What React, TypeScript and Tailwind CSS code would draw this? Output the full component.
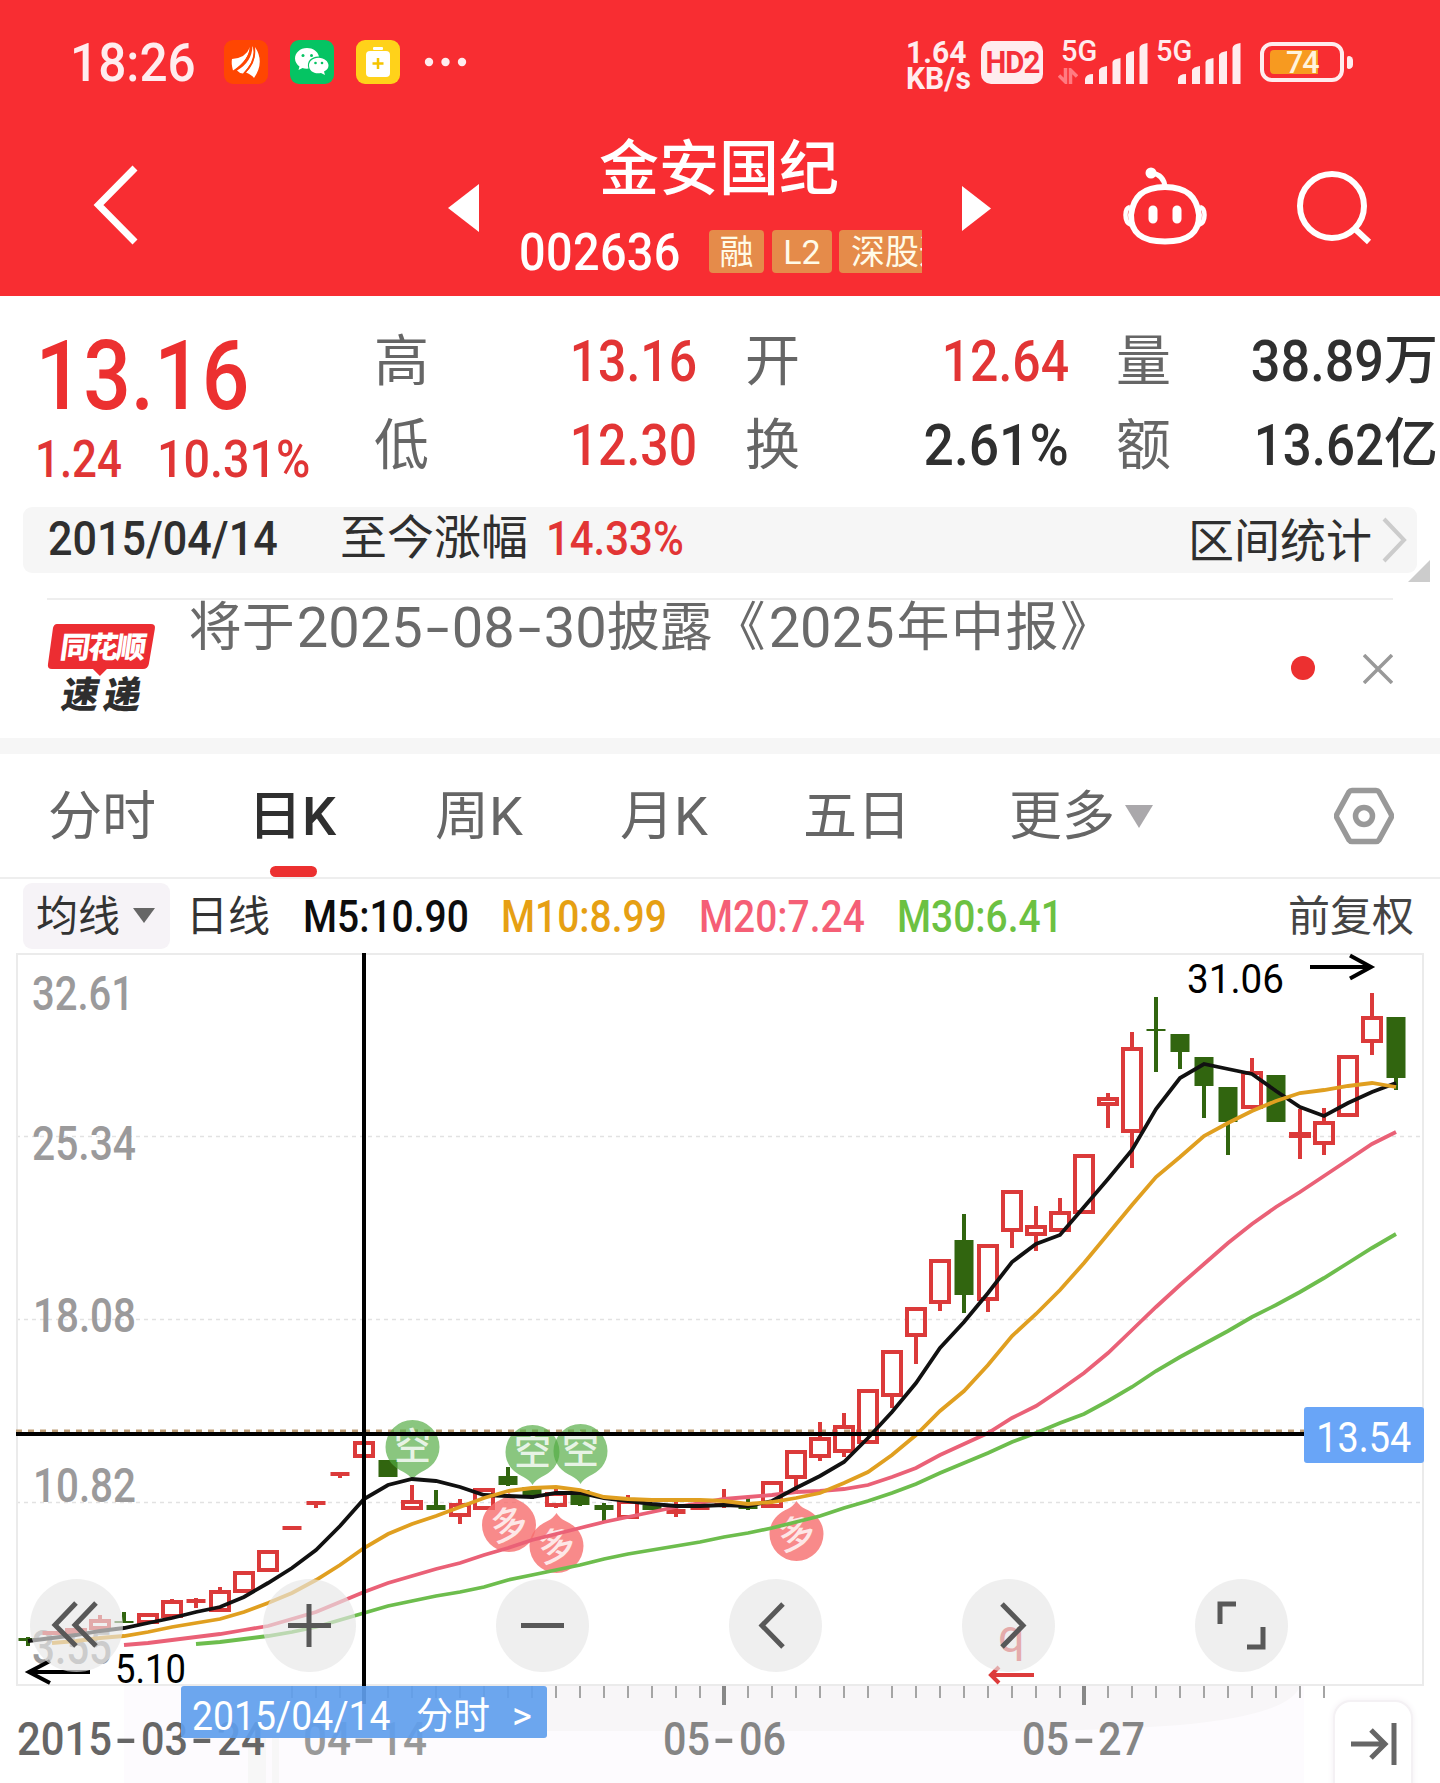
import { Fragment } from 'react';
import type { ReactNode } from 'react';
import { clsx } from 'clsx';

type Candle = {
  up: boolean;
  high: number;
  top: number;
  bottom: number;
  low: number;
};

const STEP = 24;
const FIRST_X = 28;
const xAt = (i: number) => FIRST_X + i * STEP;

// [direction, high, body top, body bottom, low]
const rawCandles: [number, number, number, number, number][] = [
  [0, 1637, 1638, 1641, 1646],
  [1, 1631, 1631, 1635, 1635],
  [1, 1628, 1628, 1634, 1634],
  [1, 1615, 1619, 1630, 1630],
  [0, 1612, 1621, 1623, 1623],
  [1, 1613, 1613, 1624, 1624],
  [1, 1599, 1600, 1618, 1618],
  [1, 1598, 1599, 1603, 1608],
  [1, 1587, 1590, 1612, 1612],
  [1, 1571, 1571, 1593, 1593],
  [1, 1550, 1550, 1572, 1572],
  [1, 1526, 1526, 1530, 1530],
  [1, 1501, 1501, 1505, 1508],
  [1, 1472, 1472, 1476, 1478],
  [1, 1441, 1441, 1458, 1458],
  [0, 1460, 1460, 1477, 1477],
  [1, 1485, 1500, 1510, 1510],
  [0, 1490, 1505, 1510, 1510],
  [1, 1499, 1503, 1517, 1524],
  [1, 1488, 1488, 1510, 1510],
  [0, 1467, 1476, 1485, 1486],
  [0, 1487, 1487, 1497, 1499],
  [1, 1488, 1492, 1507, 1508],
  [0, 1490, 1490, 1505, 1506],
  [0, 1503, 1505, 1510, 1521],
  [1, 1495, 1500, 1519, 1519],
  [0, 1505, 1505, 1510, 1510],
  [1, 1502, 1509, 1514, 1517],
  [1, 1506, 1506, 1510, 1510],
  [1, 1489, 1503, 1507, 1508],
  [0, 1498, 1505, 1509, 1510],
  [1, 1481, 1481, 1508, 1508],
  [1, 1450, 1450, 1479, 1494],
  [1, 1422, 1437, 1458, 1461],
  [1, 1413, 1425, 1453, 1457],
  [1, 1389, 1389, 1444, 1444],
  [1, 1350, 1350, 1397, 1408],
  [1, 1307, 1307, 1337, 1364],
  [1, 1259, 1259, 1304, 1311],
  [0, 1214, 1240, 1295, 1313],
  [1, 1244, 1244, 1301, 1312],
  [1, 1190, 1190, 1232, 1248],
  [1, 1206, 1225, 1236, 1251],
  [1, 1198, 1211, 1232, 1232],
  [1, 1154, 1154, 1214, 1214],
  [1, 1093, 1097, 1106, 1128],
  [1, 1032, 1047, 1133, 1168],
  [0, 997, 1029, 1031, 1072],
  [0, 1034, 1034, 1052, 1069],
  [0, 1057, 1057, 1086, 1118],
  [0, 1087, 1087, 1122, 1155],
  [1, 1058, 1071, 1109, 1109],
  [0, 1075, 1075, 1122, 1122],
  [1, 1109, 1132, 1138, 1159],
  [1, 1108, 1121, 1145, 1155],
  [1, 1055, 1055, 1117, 1117],
  [1, 993, 1016, 1043, 1055],
  [0, 1017, 1017, 1078, 1090],
];

const candles: Candle[] = rawCandles.map(([up, high, top, bottom, low]) => ({
  up: up === 1,
  high,
  top,
  bottom,
  low,
}));

const averages = [
  {
    name: 'M30',
    color: '#6dbd4d',
    start: 7,
    ys: [
      1644, 1642, 1639, 1636, 1632, 1627, 1620, 1613, 1606, 1601, 1596, 1592, 1587, 1580, 1575, 1570,
      1565, 1559, 1554, 1550, 1546, 1542, 1537, 1533, 1528, 1522, 1516, 1508, 1501, 1493, 1484, 1473,
      1463, 1453, 1442, 1433, 1423, 1414, 1401, 1387, 1371, 1357, 1344, 1331, 1317, 1305, 1292, 1278,
      1263, 1248, 1234,
    ],
  },
  {
    name: 'M20',
    color: '#ea6177',
    start: 4,
    ys: [
      1645, 1643, 1640, 1637, 1634, 1630, 1626, 1619, 1612, 1602, 1592, 1583, 1576, 1569, 1563, 1555,
      1548, 1540, 1534, 1528, 1522, 1517, 1512, 1507, 1503, 1499, 1497, 1495, 1492, 1491, 1489, 1485,
      1477, 1468, 1455, 1444, 1433, 1418, 1406, 1390, 1373, 1353, 1330, 1307, 1285, 1264, 1243, 1224,
      1207, 1192, 1176, 1160, 1144, 1132,
    ],
  },
  {
    name: 'M5',
    color: '#111111',
    start: 0,
    ys: [
      1641, 1638, 1635, 1631, 1628, 1623, 1618, 1612, 1607, 1597, 1583, 1568, 1550, 1526, 1499, 1485,
      1479, 1481, 1487, 1495, 1496, 1497, 1493, 1493, 1498, 1501, 1504, 1506, 1506, 1505, 1506, 1501,
      1488, 1476, 1462, 1438, 1412, 1383, 1348, 1322, 1293, 1262, 1244, 1235, 1207, 1179, 1150, 1109,
      1078, 1064, 1069, 1074, 1091, 1107, 1116, 1103, 1092, 1083,
    ],
  },
  {
    name: 'M10',
    color: '#e09f20',
    start: 1,
    ys: [
      1643, 1641, 1638, 1636, 1632, 1627, 1623, 1619, 1612, 1603, 1593, 1580, 1565, 1548, 1534, 1524,
      1516, 1507, 1498, 1491, 1488, 1487, 1490, 1497, 1499, 1500, 1500, 1500, 1501, 1504, 1502, 1498,
      1493, 1483, 1472, 1455, 1435, 1411, 1391, 1365, 1336, 1314, 1290, 1263, 1234, 1205, 1177, 1157,
      1136, 1123, 1111, 1101, 1093, 1090, 1086, 1083, 1087,
    ],
  },
];

const tabs = [
  { label: '分时', width: 'w-[200px]' },
  { label: '日K', width: 'w-[187px]', active: true },
  { label: '周K', width: 'w-[185px]' },
  { label: '月K', width: 'w-[183px]' },
  { label: '五日', width: 'w-[206px]' },
];

const quotes = [
  { label: '高', value: '13.16', tone: 'mr-[2px] scale-x-[0.86] text-[#e23535]' },
  { label: '开', value: '12.64', tone: 'mr-[1px] scale-x-[0.86] text-[#e23535]' },
  { label: '量', value: '38.89', unit: '万', tone: 'scale-x-[0.9] text-[#2f2f2f]' },
  { label: '低', value: '12.30', tone: 'mr-[2px] scale-x-[0.86] text-[#e23535]' },
  { label: '换', value: '2.61%', tone: 'mr-[1px] scale-x-[0.92] text-[#2f2f2f]' },
  { label: '额', value: '13.62', unit: '亿', tone: 'scale-x-[0.88] text-[#2f2f2f]' },
];

const Signal = () => (
  <svg width="63" height="42" viewBox="0 0 63 42" fill="#ffecee">
    <path d="M0 42V37Q1 32 8 32V42Z" />
    <path d="M14 42V28Q15 25 22 24V42Z" />
    <path d="M27.500 42V20Q28 17 35.500 16V42Z" />
    <path d="M41 42V13Q42 10 49 9V42Z" />
    <path d="M54.500 42V6Q55 2 62.500 1V42Z" />
  </svg>
);

const StatusBar = () => (
  <div className="flex h-[124px] items-center text-[#ffecee]">
    <span className="ml-[70px] mt-[2px] w-[154px] origin-left scale-x-[0.935] text-[53px] font-medium leading-none">18:26</span>
    <svg width="44" height="44" viewBox="0 0 44 44">
      <rect width="44" height="44" rx="9" fill="#ff4602" />
      <path d="M8 19Q22 18 26 7Q25 20 9 30.500Q7 23 8 19Z" fill="#fff" />
      <path d="M13 30.500Q28 22 28.500 6Q33 15 25 26Q20 33 19 33.500Q15 33 13 30.500Z" fill="#fff" />
      <path d="M22 32.500Q33 22 31 7Q41 22 30 38Q28 35 22 32.500Z" fill="#fff" />
      <path d="M26.500 7Q26 20 10 31.500M29.500 6Q33 20 20 33.500" fill="none" stroke="#ff4602" strokeWidth="1.500" />
    </svg>
    <svg width="44" height="44" viewBox="0 0 44 44" className="ml-[22px]">
      <rect width="44" height="44" rx="9" fill="#05c463" />
      <path d="M17 8C10 8 5 13 5 18.500C5 22 7 24.500 9.500 26.500L8.500 30L12.500 28Q15 29 18.500 28.600C16 21 22 16 29 16.500C27.500 11 23 8 17 8Z" fill="#fff" />
      <path d="M28.500 17.700C22.500 17.700 19 21.500 19 25.500C19 31 24.500 34.500 31 33L35 35L34 31.500C37 30 38.500 28 38.500 25.500C38.500 21.500 34.500 17.700 28.500 17.700Z" fill="#fff" />
      <g fill="#05c463">
        <circle cx="13" cy="15.500" r="1.500" />
        <circle cx="21.500" cy="15.500" r="1.500" />
        <circle cx="25.500" cy="23" r="1.300" />
        <circle cx="32" cy="23" r="1.300" />
      </g>
    </svg>
    <svg width="44" height="44" viewBox="0 0 44 44" className="ml-[22px]">
      <rect width="44" height="44" rx="9" fill="#ffd21a" />
      <rect x="17" y="7" width="10" height="3" rx="1" fill="#fff" />
      <rect x="10" y="11" width="24" height="26" rx="4" fill="#fff" />
      <path d="M22 18V29M16.500 23.500H27.500" stroke="#f5c400" strokeWidth="2.500" />
    </svg>
    <svg width="44" height="10" viewBox="0 0 44 10" className="ml-[23px]" fill="#ffecee">
      <circle cx="6" cy="5" r="4.200" />
      <circle cx="22.500" cy="5" r="4.200" />
      <circle cx="39" cy="5" r="4.200" />
    </svg>
    <div className="ml-[439px] mt-2 flex w-[75px] flex-col text-[31px] font-bold leading-[26px]">
      <span className="origin-left scale-x-[0.97]">1.64</span>
      <span className="origin-left scale-x-[0.97]">KB/s</span>
    </div>
    <div className="flex h-[43px] w-[62px] items-center justify-center rounded-[10px] bg-[#ffecee] text-[31px] font-bold leading-none tracking-[-1px] text-[#f5303a]">
      <span className="scale-x-[0.95]">HD2</span>
    </div>
    <div className="ml-[15px] flex h-[44px] items-end">
      <div className="flex h-[44px] w-[27px] flex-col justify-between">
        <span className="ml-[3px] origin-left text-[29px] font-medium leading-[22px]">5G</span>
        <svg width="20" height="16" viewBox="0 0 20 16" fill="none" stroke="#ff7b81" strokeWidth="3.500">
          <path d="M7.500 0V14L1 7.500M12.500 16V2L19 8.500" />
        </svg>
      </div>
      <Signal />
    </div>
    <div className="ml-[8px] flex h-[44px] items-end">
      <span className="h-[44px] w-[22px] text-[29px] font-medium leading-[22px]">5G</span>
      <Signal />
    </div>
    <div className="ml-[19px] flex h-[40px] w-[84px] items-center rounded-[12px] border-4 border-[#ffecee] pl-[6px]">
      <div className="flex h-[24px] w-[48px] items-center rounded-l-[4px] bg-[#f79a20] pl-[16px] text-[32px] font-medium leading-none tracking-[-1px] text-[#fff3dc]">
        <span className="origin-left scale-x-[0.95]">74</span>
      </div>
    </div>
    <div className="ml-[3px] h-[13px] w-[6px] rounded-r-[5px] rounded-l-[2px] bg-[#ffecee]" />
  </div>
);

const Tag = ({ children, className }: { children: ReactNode; className?: string }) => (
  <span className={clsx('h-[43px] shrink-0 whitespace-nowrap rounded-[4px] bg-[#e58b4a] text-center text-[34px] leading-[45px] text-[#fffbe8]', className)}>
    {children}
  </span>
);

const NavBar = () => (
  <div className="flex h-[172px] items-start text-white">
    <svg width="46" height="82" viewBox="0 0 46 82" className="ml-[93px] mt-[40px]" fill="none" stroke="#fff" strokeWidth="7">
      <path d="M42 4L5.500 41L42 78" />
    </svg>
    <svg width="31" height="48" viewBox="0 0 31 48" className="ml-[309px] mt-[60px]" fill="#fff">
      <path d="M0 24L31 0V48Z" />
    </svg>
    <div className="ml-[37px] mt-[10px] w-[406px] overflow-hidden">
      <div className="h-[96px] text-center text-[60px] font-medium leading-[71px]">金安国纪</div>
      <div className="flex h-[43px] items-center">
        <span className="ml-[3px] mt-[2px] w-[190px] shrink-0 origin-left scale-x-[0.9] text-[52px] font-medium leading-none tracking-[0.4px]">
          002636
        </span>
        <Tag className="w-[55px]">融</Tag>
        <Tag className="ml-[8px] w-[60px]">L2</Tag>
        <Tag className="ml-[7px] w-[150px] pl-[12px] text-left">深股通</Tag>
      </div>
    </div>
    <svg width="29" height="45" viewBox="0 0 29 45" className="ml-[40px] mt-[62px]" fill="#fff">
      <path d="M29 22.500L0 0V45Z" />
    </svg>
    <svg width="88" height="82" viewBox="0 0 88 82" className="ml-[130px] mt-[41px]" fill="none" stroke="#fff" strokeWidth="6">
      <path d="M44 22C66 22 76 32 78 50C78 67 69 76.500 44 76.500C19 76.500 10 67 10 50C12 32 22 22 44 22Z" />
      <path d="M9 42Q4.500 43 4.500 50Q4.500 58 10 60M79 42Q83.500 43 83.500 50Q83.500 58 78 60" strokeWidth="4.500" />
      <path d="M44 22Q43 10 31 8" strokeWidth="5" />
      <circle cx="30" cy="8" r="5.500" fill="#fff" stroke="none" />
      <path d="M32 45V54M56 45V54" strokeWidth="9" strokeLinecap="round" />
    </svg>
    <svg width="80" height="80" viewBox="0 0 80 80" className="ml-[87px] mt-[44px]" fill="none" stroke="#fff" strokeWidth="6">
      <circle cx="36" cy="38" r="32" />
      <path d="M58 60L73 74" />
    </svg>
  </div>
);

const QuotePanel = () => (
  <div className="flex h-[211px]">
    <div className="w-[374px] text-[#ec3030]">
      <div className="mt-[34px] h-[92px] origin-left scale-x-[0.865] pl-[41px] text-[97px] font-medium leading-[92px]">
        13.16
      </div>
      <div className="mt-[12px] flex h-[52px] text-[51px] font-medium leading-[52px] text-[#e03535]">
        <span className="ml-[35px] w-[122px] origin-left scale-x-[0.86]">1.24</span>
        <span className="origin-left scale-x-[0.915]">10.31%</span>
      </div>
    </div>
    <div className="mt-[23px] grid h-[168px] grid-cols-[325px_325px_322px] gap-x-[46px]">
      {quotes.map(q => (
        <div key={q.label} className="flex h-[84px] items-center text-[58px] leading-none">
          <span className="grow text-[55px] text-[#666]">{q.label}</span>
          <span className={clsx('origin-right font-medium', q.tone)}>{q.value}</span>
          {q.unit && <span className="text-[54px] font-medium text-[#2f2f2f]">{q.unit}</span>}
        </div>
      ))}
    </div>
  </div>
);

const IntervalBar = () => (
  <div className="relative mx-[23px] flex h-[66px] items-center rounded-[9px] bg-[#f6f6f6] text-[47px] leading-none text-[#2f2f2f]">
    <span className="-mt-1 ml-[25px] w-[292px] origin-left scale-x-[0.88] text-[49px] font-medium">2015/04/14</span>
    <span className="-mt-1.5 w-[206px]">至今涨幅</span>
    <span className="-mt-1 grow origin-left scale-x-[0.855] text-[49px] font-medium text-[#e23535]">14.33%</span>
    <span className="mr-[10px] mt-[2px] text-[46px]">区间统计</span>
    <svg width="26" height="46" viewBox="0 0 26 46" className="mr-[9px]" fill="none" stroke="#ccc" strokeWidth="4">
      <path d="M2 2L22 23L2 44" />
    </svg>
    <svg width="22" height="22" viewBox="0 0 22 22" className="absolute -right-[13px] top-[53px]" fill="#ccc">
      <path d="M22 0V22H0Z" />
    </svg>
  </div>
);

const newsDate = ['2025', '08', '30'];

const NewsStrip = () => (
  <div className="mx-[47px] mt-[25px] flex h-[140px] border-t-2 border-[#eee]">
    <svg width="112" height="92" viewBox="0 0 112 92" className="mt-[22px]">
      <path d="M10 2H104Q109 2 108 7L102 42Q101 47 96 47H60L53 54L46 47H5Q0 47 1 42L6 6Q7 2 10 2Z" fill="#ec2d32" />
      <text x="0" y="0" transform="translate(12 36) skewX(-8)" fontSize="30" fontWeight="900" fill="#fff" textLength="86" className="font-['Noto_Sans_CJK_SC',sans-serif]">
        同花顺
      </text>
      <text x="0" y="0" transform="translate(13 86) skewX(-10)" fontSize="37" fontWeight="900" fill="#2e2e2e" textLength="79" className="font-['Noto_Sans_CJK_SC',sans-serif]">
        速递
      </text>
    </svg>
    <div className="ml-[30px] flex h-[56px] w-[1104px] whitespace-nowrap text-[53px] leading-[57px] text-[#6a6a6a]">
      <span>将于</span>
      <span className="ml-[2px] text-[56px]">
        {newsDate.map((part, i) => (
          <Fragment key={part}>
            {i > 0 && <span className="inline-block w-[29px] scale-x-[1.5] text-center">-</span>}
            {part}
          </Fragment>
        ))}
      </span>
      <span>披露《</span>
      <span className="ml-[3px] text-[56px]">2025</span>
      <span className="ml-[2px] tracking-[1.5px]">年中报》</span>
    </div>
    <div className="mt-[56px] size-[24px] rounded-full bg-[#ec3030]" />
    <svg width="30" height="30" viewBox="0 0 30 30" className="ml-[48px] mt-[54px]" fill="none" stroke="#999" strokeWidth="3.500">
      <path d="M1 1L29 29M29 1L1 29" />
    </svg>
  </div>
);

const PeriodTabs = () => (
  <div className="flex h-[125px] border-b-2 border-[#eee] pl-[48px] text-[53px] leading-[60px] text-[#666]">
    {tabs.map(t => (
      <div key={t.label} className={clsx('flex flex-col pt-[33px]', t.width)}>
        <span className={clsx('origin-left scale-x-[1.02]', t.active && 'font-medium text-[#2f2f2f]')}>{t.label}</span>
        {t.active && <span className="ml-[22px] mt-[19px] h-[12px] w-[47px] rounded-[6px] bg-[#ec3030]" />}
      </div>
    ))}
    <div className="flex w-[325px] pt-[33px]">
      <span>更多</span>
      <svg width="28" height="23" viewBox="0 0 28 23" className="ml-[10px] mt-[18px]" fill="#aaa8ab">
        <path d="M0 0H28L14 23Z" />
      </svg>
    </div>
    <svg width="60" height="58" viewBox="0 0 60 58" className="mt-[33px]" fill="none" stroke="#999" strokeWidth="5.500" strokeLinejoin="round">
      <path d="M18 3.500H42Q44 3.500 45 5L57 27Q58 29 57 31L45 53Q44 54.500 42 54.500H18Q16 54.500 15 53L3 31Q2 29 3 27L15 5Q16 3.500 18 3.500Z" />
      <circle cx="30" cy="29" r="8.500" />
    </svg>
  </div>
);

const AverageLegend = () => (
  <div className="flex h-[73px] items-center text-[42px] leading-none text-[#333]">
    <div className="ml-[23px] flex h-[66px] w-[147px] items-center rounded-[9px] bg-[#f6f3f7]">
      <span className="ml-[13px] mt-[2px]">均线</span>
      <svg width="22" height="15" viewBox="0 0 22 15" className="ml-[13px]" fill="#666">
        <path d="M0 0H22L11 15Z" />
      </svg>
    </div>
    <span className="ml-[16px] mt-[2px] w-[117px]">日线</span>
    <span className="mt-[2px] w-[198px] origin-left scale-x-[0.885] text-[44px] font-medium text-[#0d0d0d]">M5:10.90</span>
    <span className="mt-[2px] w-[198px] origin-left scale-x-[0.885] text-[44px] font-medium text-[#e6a013]">M10:8.99</span>
    <span className="mt-[2px] w-[198px] origin-left scale-x-[0.885] text-[44px] font-medium text-[#f55f76]">M20:7.24</span>
    <span className="mt-[2px] w-[391px] origin-left scale-x-[0.885] text-[44px] font-medium text-[#6cc142]">M30:6.41</span>
    <span className="mt-[2px] text-[#444]">前复权</span>
  </div>
);

const CandleMark = ({ candle, x }: { candle: Candle; x: number }) => {
  const { up, high, top, bottom, low } = candle;
  if (!up) {
    return (
      <g fill="#31650f">
        <rect x={x - 2} y={high} width="4" height={low - high} />
        <rect x={x - 9.5} y={top} width="19" height={bottom - top} />
      </g>
    );
  }
  const flat = bottom - top < 6;
  return (
    <g fill="#db3a3a">
      <rect x={x - 2} y={high} width="4" height={top - high} />
      <rect x={x - 2} y={bottom} width="4" height={low - bottom} />
      {flat ? (
        <rect x={x - 9.5} y={top} width="19" height={bottom - top} />
      ) : (
        <rect x={x - 9} y={top + 2} width="18" height={bottom - top - 4} fill="none" stroke="#db3a3a" strokeWidth="4" />
      )}
    </g>
  );
};

// Signal balloons: 空 points down at a high, 多 points up at a low
const Pin = ({ x, y, long }: { x: number; y: number; long?: boolean }) => (
  <g transform={`translate(${x} ${y})`}>
    <path
      d="M-27 0A27 27 0 1 1 27 0C27 13 18 21 9 25Q3 28 0 33Q-3 28 -9 25C-18 21 -27 13 -27 0Z"
      transform={long ? 'scale(1 -1)' : undefined}
      fill={long ? '#f66d6d' : '#53ab42'}
      opacity={long ? 0.8 : 0.68}
    />
    <text
      textAnchor="middle"
      y="13"
      fontSize="37"
      fontWeight="500"
      fill="#fff"
      opacity="0.8"
      transform={long ? 'rotate(-14)' : undefined}
      className="font-['Noto_Sans_CJK_SC',sans-serif]"
    >
      {long ? '多' : '空'}
    </text>
  </g>
);

const priceLabels = [
  { text: '32.61', x: 32, y: 1010, w: 102 },
  { text: '25.34', x: 32, y: 1160, w: 104 },
  { text: '18.08', x: 33, y: 1332, w: 103 },
  { text: '10.82', x: 33, y: 1502, w: 103 },
  { text: '3.55', x: 32, y: 1664, w: 80 },
];

// each part of a date is set in its own cell: [text, x, width]
const dateLabels: { color: string; parts: [string, number, number][] }[] = [
  { color: '#666', parts: [['2015', 17, 95], ['-', 115, 22], ['03', 141, 47], ['-', 191, 22], ['24', 217, 48]] },
  { color: '#999', parts: [['04', 303, 48], ['-', 353, 22], ['14', 379, 48]] },
  { color: '#858585', parts: [['05', 663, 47], ['-', 713, 22], ['06', 739, 47]] },
  { color: '#858585', parts: [['05', 1022, 47], ['-', 1073, 22], ['27', 1098, 47]] },
];

const ticks = Array.from({ length: 44 }, (_, i) => 292 + i * STEP);

const KLineChart = () => (
  <svg width="1440" height="831" viewBox="0 952 1440 831" className="block">
    <rect x="124" y="1686" width="1180" height="97" fill="#fdfbfe" />
    <path d="M547 1686H1300Q1290 1715 1180 1725Q1100 1731 1000 1731H547Z" fill="#f8f6f8" />
    <path d="M248 1738H266V1783H248ZM272 1738H279V1783H272Z" fill="#f7f7f7" />
    <g stroke="#e2e2e2" strokeWidth="1.500" strokeDasharray="4 4">
      <path d="M16 1136.500H1424M16 1319.500H1424M16 1502.500H1424" />
    </g>
    <rect x="17" y="954" width="1406" height="731" fill="none" stroke="#ebebeb" strokeWidth="2" />
    {priceLabels.map(l => (
      <text key={l.text} x={l.x} y={l.y} fontSize="48" fontWeight="500" fill="#9b9a9b" textLength={l.w} lengthAdjust="spacingAndGlyphs">
        {l.text}
      </text>
    ))}

    <path d="M16 1431H1424" stroke="#bf9f78" strokeWidth="3" strokeDasharray="6 6" />
    {candles.map((c, i) => (
      <CandleMark key={i} candle={c} x={xAt(i)} />
    ))}
    <Pin x={412.5} y={1447} />
    <Pin x={532.5} y={1452} />
    <Pin x={580.5} y={1451} />
    <Pin x={509} y={1525} long />
    <Pin x={556.5} y={1546} long />
    <Pin x={796.5} y={1534} long />
    {averages.map(a => (
      <polyline
        key={a.name}
        points={a.ys.map((y, i) => `${xAt(a.start + i)},${y}`).join(' ')}
        fill="none"
        stroke={a.color}
        strokeWidth="3.800"
      />
    ))}

    {/* Extremes of the visible range */}
    <g fill="none" stroke="#000" strokeWidth="4">
      <path d="M1310 967H1370M1350 955.500L1371 967L1350 978.500" />
      <path d="M90 1672H30M50 1661L29 1672L50 1683" />
    </g>
    <text x="1187" y="993" fontSize="41" fill="#000" textLength="97" lengthAdjust="spacingAndGlyphs">31.06</text>
    <text x="115" y="1683" fontSize="41" fill="#000" textLength="71" lengthAdjust="spacingAndGlyphs">5.10</text>
    <text x="998" y="1652" fontSize="47" fill="#e03c3c" textLength="28">q</text>
    <path d="M992 1675H1034M999 1667L991 1675L999 1683" fill="none" stroke="#dd3b3b" strokeWidth="4" />

    {ticks.map(x =>
      x === 724 || x === 1084 ? (
        <rect key={x} x={x - 2} y="1686" width="4" height="19" fill="#888" />
      ) : (
        <rect key={x} x={x - 1} y="1686" width="2" height="12" fill="#a5a5a5" />
      ),
    )}
    {dateLabels.map(d => (
      <text key={d.parts[0][1]} y="1755" fontSize="47" fill={d.color} fontWeight="500">
        {d.parts.map(([text, x, w]) => (
          <tspan key={x} x={x} textLength={w} lengthAdjust="spacingAndGlyphs">
            {text}
          </tspan>
        ))}
      </text>
    ))}
    <path d="M364 953V1704M16 1434H1424" stroke="#000" strokeWidth="4" />
  </svg>
);

const controlIcons = [
  'M30 24L9 46L30 67M50 24L29 46L50 67',
  'M46 25V68M25 46.500H68',
  'M25 46.500H68',
  'M54 25L33 46.500L54 68',
  'M40 25L61 46.500L40 68',
  'M25 45V25H41M52 68H68V48',
];

const ChartControls = () => (
  <div className="absolute left-[30px] top-[627px] flex gap-[140px]">
    {controlIcons.map((d, i) => (
      <button key={i} className="flex size-[93px] items-center justify-center rounded-full bg-[#e6e6e6]/65">
        <svg width="93" height="93" viewBox="0 0 93 93" fill="none" stroke="#585858" strokeWidth="5">
          <path d={d} transform={i === 0 ? 'translate(16 0)' : undefined} />
        </svg>
      </button>
    ))}
  </div>
);

export default function App() {
  return (
    <div className="h-[1783px] w-[1440px] overflow-hidden bg-white font-['Roboto','Noto_Sans_CJK_SC',sans-serif]">
      <header className="h-[296px] bg-[#f82d32]">
        <StatusBar />
        <NavBar />
      </header>
      <QuotePanel />
      <IntervalBar />
      <NewsStrip />
      <div className="h-[16px] bg-[#f6f6f6]" />
      <PeriodTabs />
      <AverageLegend />
      <main className="relative">
        <KLineChart />
        <ChartControls />
        <div className="absolute left-[1304px] top-[455px] flex h-[56px] w-[120px] items-center justify-center rounded-[3px] bg-[#69a5f7] text-[42px] leading-none text-white">
          <span className="mt-[5px] scale-x-[0.9]">13.54</span>
        </div>
        <div className="absolute left-[181px] top-[734px] flex h-[52px] w-[366px] items-center rounded-[3px] bg-[#5f9eed]/92 pt-[8px] text-[41px] leading-none text-white">
          <span className="ml-[11px] w-[224px] origin-left scale-x-[0.91]">2015/04/14</span>
          <span className="w-[96px] text-[37px]">分时</span>
          <span className="text-[38px]">&gt;</span>
        </div>
        <button className="absolute left-[1333px] top-[748px] flex h-[110px] w-[80px] items-start rounded-[18px] border-2 border-[#f4f1f4] bg-white shadow-[0_0_6px_#f3eff3]">
          <svg width="76" height="83" viewBox="0 0 76 83" className="block shrink-0" fill="none" stroke="#666" strokeWidth="5">
            <path d="M16 42H50M36 28L50 42L36 56M59 21V63" />
          </svg>
        </button>
      </main>
    </div>
  );
}
